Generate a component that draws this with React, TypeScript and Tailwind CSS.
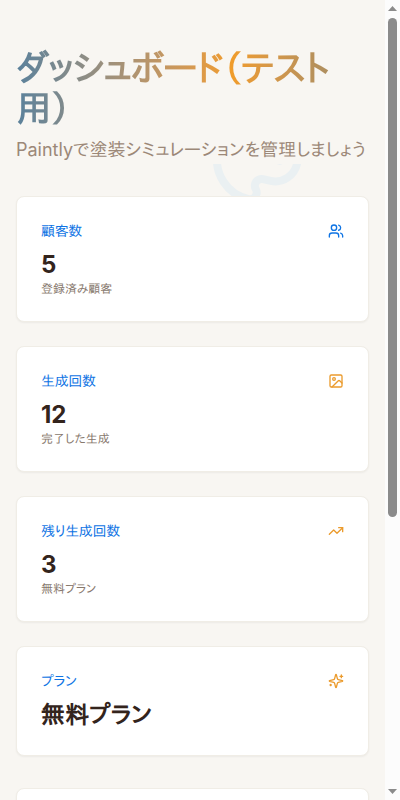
import React from "react";
import { Users, Image, TrendingUp } from "lucide-react";

type IconProps = { className?: string };

type Stat = {
  title: string;
  value: string;
  note?: string;
  Icon: React.ComponentType<IconProps>;
  tone: string;
};

function StrokeIcon({ className, children }: IconProps & { children: React.ReactNode }) {
  return (
    <svg className={className} viewBox="0 0 24 24" fill="none" stroke="currentColor" strokeWidth="2" strokeLinecap="round" strokeLinejoin="round">
      {children}
    </svg>
  );
}

function SparklesIcon({ className }: IconProps) {
  return (
    <StrokeIcon className={className}>
      <path d="M9.937 15.5A2 2 0 0 0 8.5 14.063l-6.135-1.582a.5.5 0 0 1 0-.962L8.5 9.936A2 2 0 0 0 9.937 8.5l1.582-6.135a.5.5 0 0 1 .963 0L14.063 8.5A2 2 0 0 0 15.5 9.937l6.135 1.581a.5.5 0 0 1 0 .964L15.5 14.063a2 2 0 0 0-1.437 1.437l-1.582 6.135a.5.5 0 0 1-.963 0z" />
      <path d="M20 3v4M22 5h-4M4 17v2M5 18H3" />
    </StrokeIcon>
  );
}

function PaletteIcon({ className }: IconProps) {
  return (
    <StrokeIcon className={className}>
      <circle cx="13.5" cy="6.5" r=".5" fill="currentColor" />
      <circle cx="17.5" cy="10.5" r=".5" fill="currentColor" />
      <circle cx="8.5" cy="7.5" r=".5" fill="currentColor" />
      <circle cx="6.5" cy="12.5" r=".5" fill="currentColor" />
      <path d="M12 2C6.5 2 2 6.5 2 12s4.5 10 10 10c.926 0 1.648-.746 1.648-1.688 0-.437-.18-.835-.437-1.125-.29-.289-.438-.652-.438-1.125a1.64 1.64 0 0 1 1.668-1.668h1.996c3.051 0 5.555-2.503 5.555-5.554C21.965 6.012 17.461 2 12 2z" />
    </StrokeIcon>
  );
}

const stats: Stat[] = [
  { title: "顧客数", value: "5", note: "登録済み顧客", Icon: Users, tone: "text-[#0f74e4]" },
  { title: "生成回数", value: "12", note: "完了した生成", Icon: Image, tone: "text-[#eb9b2d]" },
  { title: "残り生成回数", value: "3", note: "無料プラン", Icon: TrendingUp, tone: "text-[#eb9b2d]" },
  { title: "プラン", value: "無料プラン", Icon: SparklesIcon, tone: "text-[#eb9b2d]" },
];

const cardClass = "rounded-lg border border-[#f0ede6] bg-white shadow-[0_1px_2px_0_rgb(0_0_0/0.05)]";

function StatCard({ title, value, note, Icon, tone }: Stat) {
  return (
    <div className={`${cardClass} p-6`}>
      <div className="flex items-center justify-between pb-2">
        <h3 className="text-sm leading-5 font-medium tracking-tight text-[#0f74e4]">{title}</h3>
        <Icon className={`h-4 w-4 ${tone}`} />
      </div>
      <div className="text-2xl leading-8 font-bold text-[#33241c]">{value}</div>
      {note && <p className="text-xs leading-4 text-[#87786d]">{note}</p>}
    </div>
  );
}

function Scrollbar() {
  return (
    <div className="flex h-full w-[15px] shrink-0 flex-col items-center justify-between bg-[#fcfcfc] py-[6px]">
      <svg width="9" height="5" viewBox="0 0 9 5" fill="#8b8b8b"><path d="M0 5 4.5 0 9 5z" /></svg>
      <div className="mt-[7px] mb-auto h-[499px] w-[9px] rounded-full bg-[#8b8b8b]" />
      <svg width="9" height="5" viewBox="0 0 9 5" fill="#8b8b8b"><path d="M0 0 4.5 5 9 0z" /></svg>
    </div>
  );
}

export default function App() {
  return (
    <div lang="ja" className="flex h-[800px] w-[400px] overflow-hidden bg-[#f8f6f2] font-['Inter','IPAPGothic',sans-serif]">
      <main className="relative h-full min-w-0 flex-1 overflow-hidden px-4 pt-12">
        <div className="absolute top-[164px] left-[209px] h-10 w-24 overflow-hidden">
          <PaletteIcon className="-mt-[52px] h-24 w-24 rotate-12 text-[#eaf0f2]" />
        </div>
        <header className="relative mb-8">
          <h1 className="mb-2 bg-linear-to-r from-[#5a819b] via-[#f09c2a] via-61% to-[#92886b] bg-clip-text text-4xl leading-10 font-bold tracking-tight text-transparent">
            ダッシュボード（テスト用）
          </h1>
          <p className="text-lg leading-7 whitespace-nowrap text-[#9c8878]">Paintlyで塗装シミュレーションを管理しましょう</p>
        </header>
        <div className="relative grid gap-6">
          {stats.map((s) => <StatCard key={s.title} {...s} />)}
        </div>
        <div className={`${cardClass} relative mt-8 h-40`} />
      </main>
      <Scrollbar />
    </div>
  );
}
